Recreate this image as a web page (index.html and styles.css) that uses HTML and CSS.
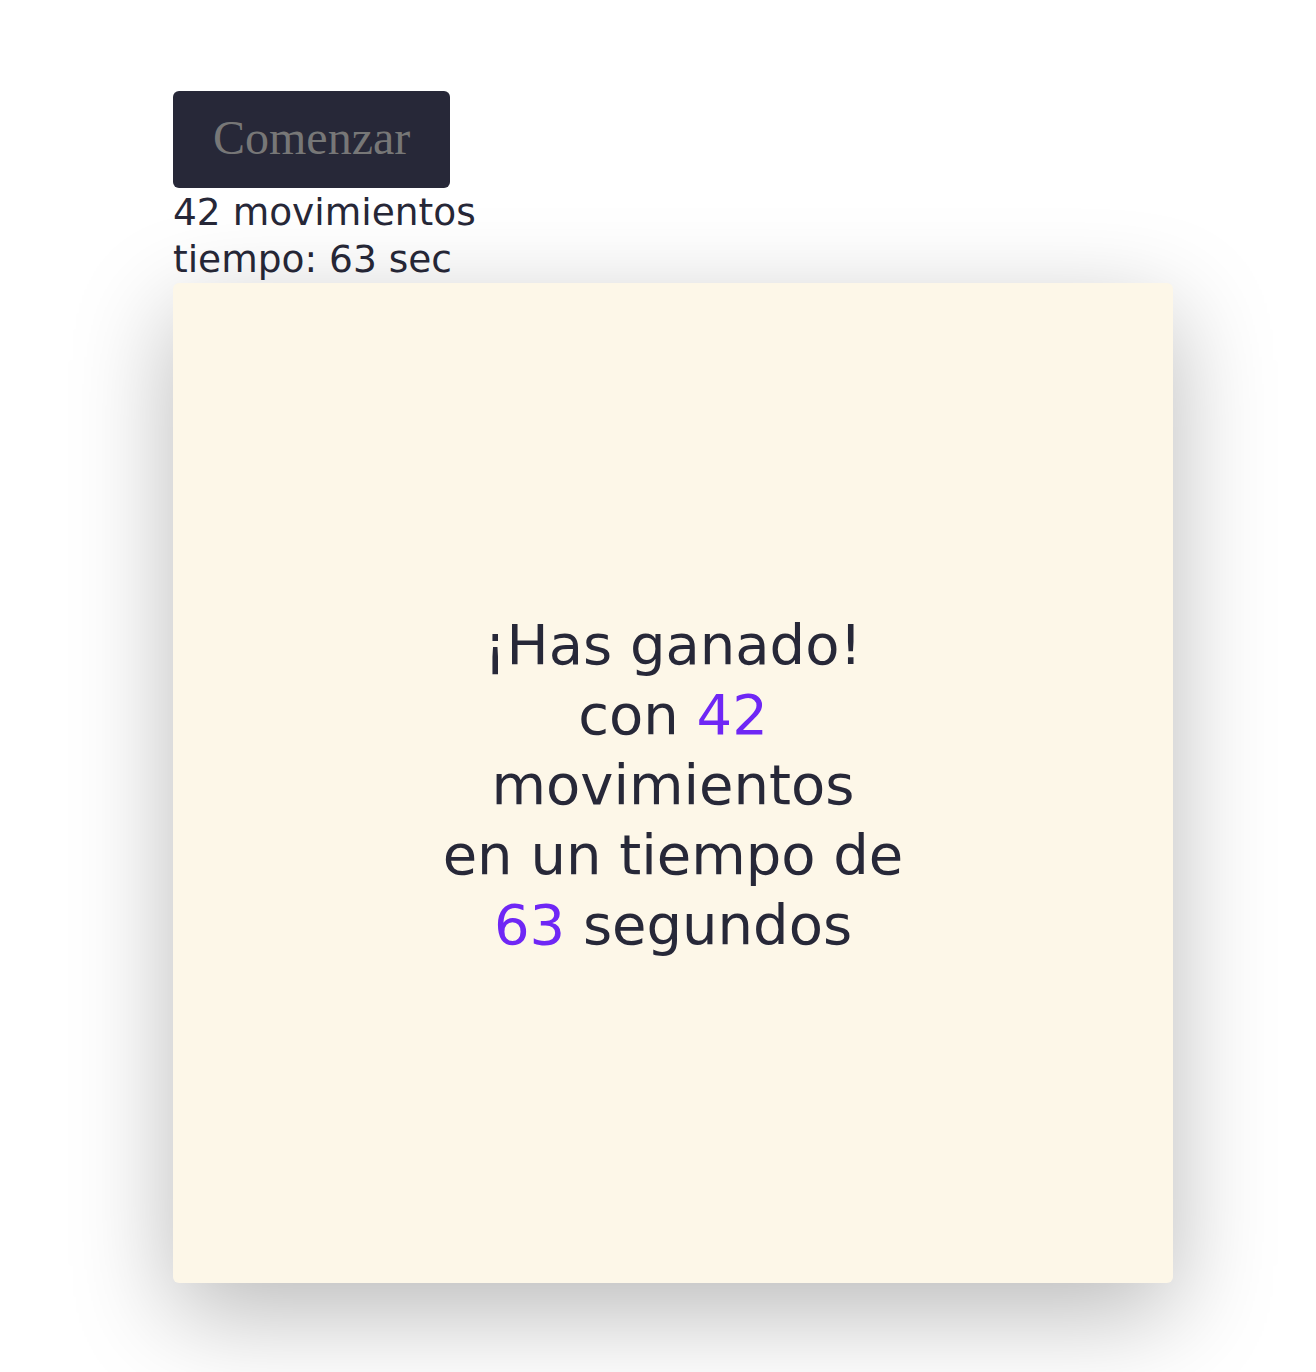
FILE: index.html
```html
<!DOCTYPE html>
<html lang="es">
<head>
<meta charset="utf-8">
<title>Memoria</title>
<link rel="stylesheet" href="styles.css">
</head>
<body>
<main class="game">
  <button class="start-btn" type="button">Comenzar</button>
  <div class="stats">
    <div class="stat">42 movimientos</div>
    <div class="stat">tiempo: 63 sec</div>
  </div>
  <section class="board">
    <div class="win">
      <div class="win-line">¡Has ganado!</div>
      <div class="win-line">con <span class="hl">42</span></div>
      <div class="win-line">movimientos</div>
      <div class="win-line">en un tiempo de</div>
      <div class="win-line"><span class="hl">63</span> segundos</div>
    </div>
  </section>
</main>
</body>
</html>
```
FILE: styles.css
```css
html, body {
  margin: 0;
  padding: 0;
  background: #ffffff;
}
body {
  font-family: "DejaVu Sans", "Noto Sans", sans-serif;
  color: #272838;
}
.game {
  padding: 91px 0 89px 173px;
  display: flex;
  flex-direction: column;
  align-items: flex-start;
}
.start-btn {
  font-family: "Liberation Serif", "Times New Roman", serif;
  font-size: 48px;
  line-height: 55px;
  color: #777777;
  background: #272838;
  border: none;
  border-radius: 6px;
  padding: 19px 40px 23px;
  cursor: pointer;
}
.stats {
  font-size: 37.5px;
  line-height: 47px;
  margin-top: 1px;
}
.board {
  width: 1000px;
  height: 1000px;
  background: #fdf7e8;
  border-radius: 6px;
  box-shadow: 0 30px 100px rgba(0, 0, 0, 0.28);
  display: flex;
  align-items: center;
  justify-content: center;
}
.win {
  text-align: center;
  font-size: 56px;
  line-height: 70px;
  margin-top: 4px;
}
.hl {
  color: #6f27f5;
}
```
